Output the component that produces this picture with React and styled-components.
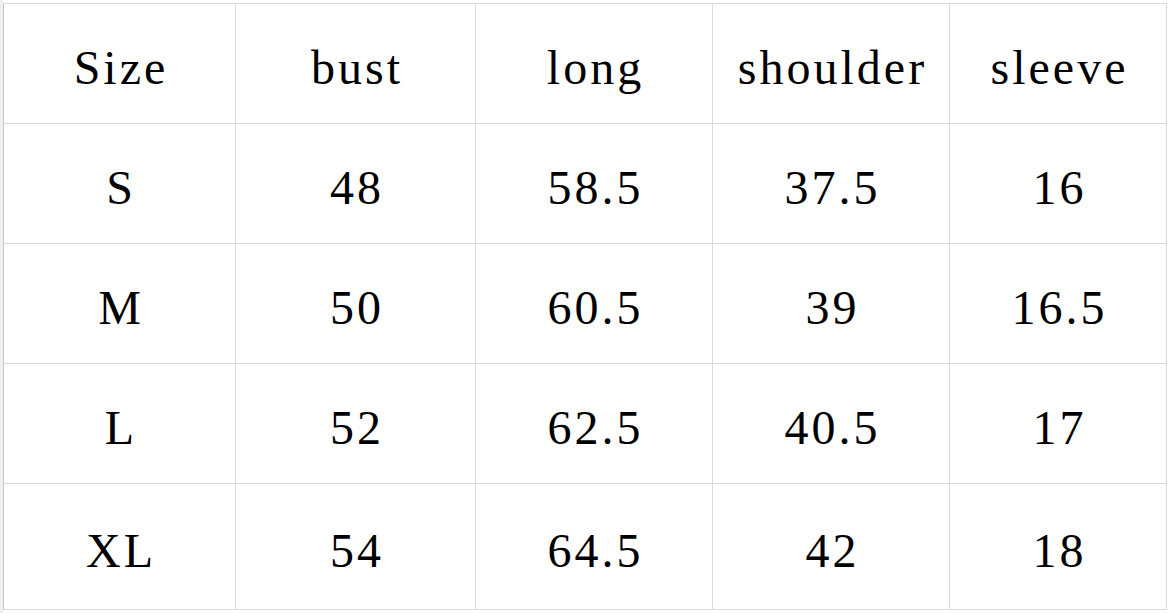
import React from 'react'
import styled, { createGlobalStyle } from 'styled-components'

const GlobalStyle = createGlobalStyle`
    html, body {
        margin: 0;
        padding: 0;
        background: #ffffff;
    }
`

const columns = [232, 240, 237, 237, 217]
const rowHeights = [120, 120, 120, 120, 126]

const rows = [
    ['Size', 'bust', 'long', 'shoulder', 'sleeve'],
    ['S', '48', '58.5', '37.5', '16'],
    ['M', '50', '60.5', '39', '16.5'],
    ['L', '52', '62.5', '40.5', '17'],
    ['XL', '54', '64.5', '42', '18'],
]

const SizeChart = () => {
    return (
        <Page>
            <Sheet>
                {rows.map((row, r) =>
                    row.map((value, c) => (
                        <Cell key={`${r}-${c}`} h={rowHeights[r]}>
                            <span>{value}</span>
                        </Cell>
                    ))
                )}
            </Sheet>
        </Page>
    )
}

export default function App() {
    return (
        <>
            <GlobalStyle />
            <SizeChart />
        </>
    )
}

const Page = styled.div`
    width: 1169px;
    height: 613px;
    box-sizing: border-box;
    padding-top: 3px;
    border-left: 3px solid #efefef;
    background: #ffffff;
    overflow: hidden;
`

const Sheet = styled.div`
    display: grid;
    grid-template-columns: ${columns.map(w => w + 'px').join(' ')};
    width: max-content;
    border-top: 1px solid #dadada;
    border-left: 1px solid #c6c6c6;
`

const Cell = styled.div`
    box-sizing: border-box;
    height: ${props => props.h}px;
    border-right: 1px solid #dadada;
    border-bottom: 1px solid #dadada;
    display: flex;
    align-items: center;
    justify-content: center;
    padding-top: 8px;
    font-family: 'Liberation Serif', 'Times New Roman', serif;
    font-size: 48px;
    letter-spacing: 3px;
    color: #000000;

    span {
        margin-right: -3px;
    }
`
